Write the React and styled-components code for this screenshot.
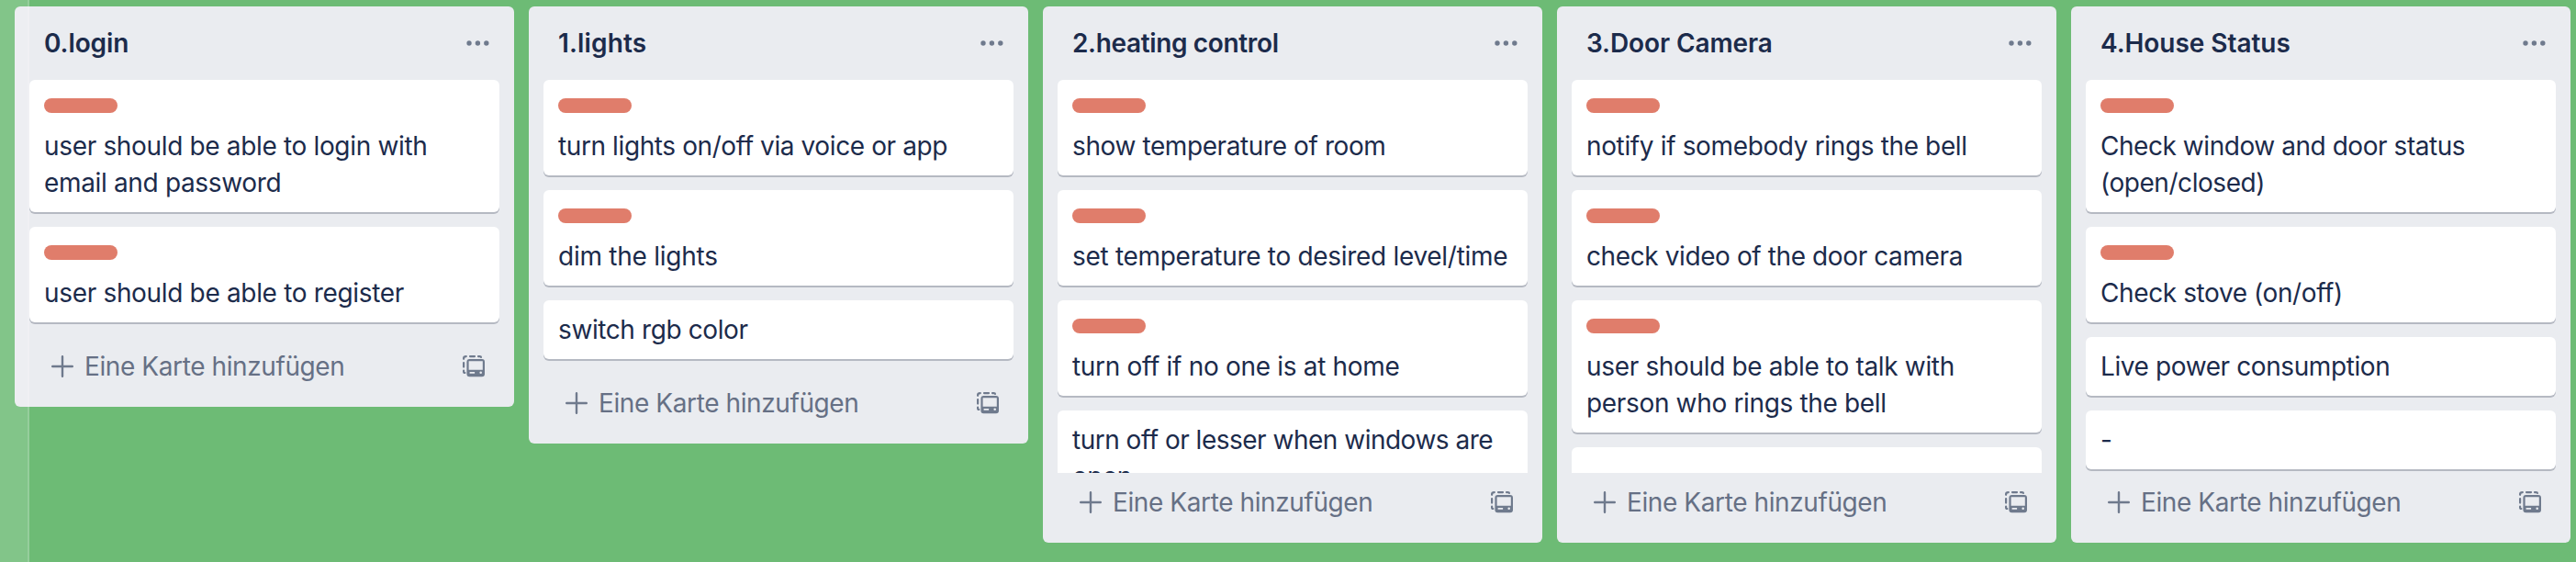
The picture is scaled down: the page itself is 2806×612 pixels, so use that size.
import React from "react";
import styled, { createGlobalStyle } from "styled-components";

const GlobalStyle = createGlobalStyle`
  *, *::before, *::after { box-sizing: border-box; }
  body { margin: 0; background: #6dbb75; font-family: Inter, "Liberation Sans", sans-serif; }
`;

const Board = styled.main`
  position: relative;
  display: flex;
  align-items: flex-start;
  gap: 16px;
  width: 2806px;
  height: 612px;
  padding: 7px 0 0 16px;
  overflow: hidden;
  background: #6dbb75;
`;

const EdgeHighlight = styled.div`
  position: absolute;
  top: 0;
  left: 0;
  width: 32px;
  height: 100%;
  background: rgba(255, 255, 255, 0.15);
  border-right: 2px solid rgba(255, 255, 255, 0.16);
  pointer-events: none;
`;

const List = styled.section`
  display: flex;
  flex-direction: column;
  flex: 0 0 544px;
  max-height: 584px;
  border-radius: 6px;
  background: #eaecf0;
  overflow: hidden;
`;

const ListHeader = styled.header`
  display: flex;
  flex: none;
  align-items: center;
  justify-content: space-between;
  height: 80px;
  padding: 0 27px 0 32px;
`;

const ListTitle = styled.h2`
  margin: 0;
  color: #1c2b4b;
  font-size: 28px;
  font-weight: 600;
  line-height: 40px;
  letter-spacing: ${(p) => p.$tracking ?? -0.35}px;
`;

const Cards = styled.div`
  display: flex;
  flex-direction: column;
  flex: 0 1 auto;
  gap: 16px;
  min-height: 0;
  padding: 0 16px 16px;
  overflow: hidden;
`;

const Card = styled.article`
  flex: none;
  min-height: 64px;
  padding: ${(p) => (p.$labelled ? "20px" : "12px")} 16px 12px;
  border-radius: 6px;
  background: #fff;
  box-shadow: 0 2px 0 #b5b9c2;
`;

const Label = styled.div`
  width: 80px;
  height: 16px;
  margin-bottom: 16px;
  border-radius: 8px;
  background: #e07d6b;
`;

const CardText = styled.p`
  margin: 0;
  color: #1c2b4b;
  font-size: 28px;
  line-height: 40px;
  letter-spacing: ${(p) => p.$tracking ?? -0.4}px;
  white-space: pre-line;
`;

const ListFooter = styled.footer`
  display: flex;
  flex: none;
  align-items: center;
  height: 76px;
  padding: 0 32px 12px 40px;
`;

const AddButton = styled.button`
  display: flex;
  flex: 1;
  align-items: center;
  gap: 12px;
  padding: 0;
  border: 0;
  background: none;
  color: #667085;
  font: inherit;
  font-size: 28px;
  line-height: 40px;
  letter-spacing: -0.4px;
`;

const Icon = styled.svg`
  display: block;
  flex: none;
  color: #6f7a8d;
`;

const DotsIcon = () => (
  <Icon width="25" height="6" viewBox="0 0 25 6" fill="currentColor">
    <circle cx="3" cy="3" r="2.7" />
    <circle cx="12.4" cy="3" r="2.7" />
    <circle cx="21.8" cy="3" r="2.7" />
  </Icon>
);

const PlusIcon = () => (
  <Icon width="24" height="24" viewBox="0 0 24 24" stroke="currentColor" strokeWidth="2.4" strokeLinecap="round">
    <path d="M12 1.2V22.8M1.2 12H22.8" />
  </Icon>
);

const TemplateIcon = () => (
  <Icon width="24" height="24" viewBox="0 0 24 24">
    <g fill="none" stroke="currentColor" strokeWidth="2.2" strokeLinecap="round">
      <path d="M1.1 3.8V3Q1.1 1.1 3.8 1.1M8 1.1H13M17 1.1H18.4Q20 1.1 20 2M1.1 8V12.6M1.1 16.6V17.4Q1.1 19 2.4 19" />
    </g>
    <path
      fill="currentColor"
      fillRule="evenodd"
      d="M7.4 4H21Q24 4 24 7V20.3Q24 23.3 21 23.3H7.4Q4.4 23.3 4.4 20.3V7Q4.4 4 7.4 4ZM6.6 6.2V15.8H21.8V6.2ZM7.6 17.9V19.7H13.1V17.9ZM19.7 17.5A1.3 1.3 0 1 0 19.7 20.1A1.3 1.3 0 1 0 19.7 17.5Z"
    />
  </Icon>
);

const lists = [
  {
    title: "0.login",
    tracking: -0.1,
    cards: [
      { label: true, tracking: -0.34, text: "user should be able to login with\nemail and password" },
      { label: true, tracking: -0.33, text: "user should be able to register" },
    ],
  },
  {
    title: "1.lights",
    tracking: 0.15,
    cards: [
      { label: true, text: "turn lights on/off via voice or app" },
      { label: true, tracking: -0.25, text: "dim the lights" },
      { text: "switch rgb color" },
    ],
  },
  {
    title: "2.heating control",
    cards: [
      { label: true, text: "show temperature of room" },
      { label: true, tracking: -0.3, text: "set temperature to desired level/time" },
      { label: true, tracking: -0.31, text: "turn off if no one is at home" },
      { tracking: -0.5, text: "turn off or lesser when windows are\nopen" },
    ],
  },
  {
    title: "3.Door Camera",
    tracking: -0.1,
    cards: [
      { label: true, tracking: -0.36, text: "notify if somebody rings the bell" },
      { label: true, text: "check video of the door camera" },
      { label: true, tracking: -0.34, text: "user should be able to talk with\nperson who rings the bell" },
      {},
    ],
  },
  {
    title: "4.House Status",
    tracking: -0.05,
    cards: [
      { label: true, tracking: -0.45, text: "Check window and door status\n(open/closed)" },
      { label: true, text: "Check stove (on/off)" },
      { text: "Live power consumption" },
      { text: "-" },
    ],
  },
];

export default function App() {
  return (
    <>
      <GlobalStyle />
      <Board>
        {lists.map((list) => (
          <List key={list.title}>
            <ListHeader>
              <ListTitle $tracking={list.tracking}>{list.title}</ListTitle>
              <DotsIcon />
            </ListHeader>
            <Cards>
              {list.cards.map((card, i) => (
                <Card key={i} $labelled={card.label}>
                  {card.label && <Label />}
                  {card.text && <CardText $tracking={card.tracking}>{card.text}</CardText>}
                </Card>
              ))}
            </Cards>
            <ListFooter>
              <AddButton>
                <PlusIcon />
                Eine Karte hinzufügen
              </AddButton>
              <TemplateIcon />
            </ListFooter>
          </List>
        ))}
        <EdgeHighlight />
      </Board>
    </>
  );
}
